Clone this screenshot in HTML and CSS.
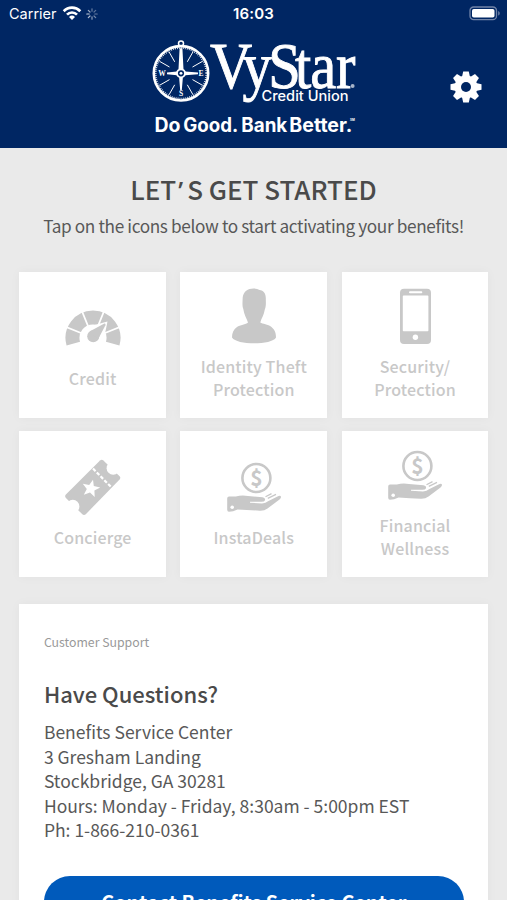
FILE: index.html
```html
<!DOCTYPE html>
<html lang="en">
<head>
    <meta charset="UTF-8">
    <meta name="viewport" content="width=device-width, initial-scale=1.0">
    <title>VyStar Credit Union</title>
    <link rel="stylesheet" href="styles.css">
</head>
<body>
    <header>
        <div class="status-bar">
            <div class="carrier">
                <span>Carrier</span>
                <svg class="wifi" width="20" height="16" viewBox="0 0 20 16">
                    <g fill="none" stroke="#fff" stroke-width="2.7">
                        <path d="M1.7 6.2a11.6 11.6 0 0 1 16.6 0"/>
                        <path d="M5 9.6a7 7 0 0 1 10 0"/>
                    </g>
                    <path d="M10 15l-3-3.1a4.3 4.3 0 0 1 6 0z" fill="#fff"/>
                </svg>
                <svg class="spinner" width="12" height="12" viewBox="-6 -6 12 12" stroke="#fff" stroke-width="1.2" stroke-linecap="round">
                    <path d="M0-2.8v-2.4" opacity=".4"/>
                    <path d="M2-2L3.7-3.7" opacity=".35"/>
                    <path d="M2.8 0h2.4" opacity=".4"/>
                    <path d="M2 2l1.7 1.7" opacity=".45"/>
                    <path d="M0 2.8v2.4" opacity=".55"/>
                    <path d="M-2 2l-1.7 1.7" opacity=".7"/>
                    <path d="M-2.8 0h-2.4" opacity=".8"/>
                    <path d="M-2-2l-1.7-1.7" opacity=".6"/>
                </svg>
            </div>
            <div class="time">16:03</div>
            <svg class="battery" width="32" height="15" viewBox="0 0 32 15">
                <rect x="1" y="1" width="26.5" height="12.6" rx="3.6" fill="none" stroke="#7184a8" stroke-width="1.3"/>
                <rect x="3" y="3" width="22.5" height="8.6" rx="1.8" fill="#fff"/>
                <path d="M29.2 5v4.6c2-.8 2-3.8 0-4.6z" fill="#7184a8"/>
            </svg>
        </div>
        <div class="brand-bar">
            <svg class="logo" width="208" height="100" viewBox="150 38 208 100" fill="#fff">
                <!-- Compass -->
                <g transform="translate(181 73.3)">
                    <circle r="27.2" fill="none" stroke="#fff" stroke-width="2.6"/>
                    <circle r="25.2" fill="none" stroke="#fff" stroke-width="1.5" stroke-dasharray=".8 1.2"/>
                    <circle cy="-29.8" r="2.5" fill="none" stroke="#fff" stroke-width="1.5"/>
                    <g stroke="#fff" stroke-width="1">
                        <path d="M6.3-11.5L12-21.5M11.5-6.3L21.5-12M11.5 6.3L21.5 12M6.3 11.5L12 21.5M-6.3 11.5L-12 21.5M-11.5 6.3L-21.5 12M-11.5-6.3L-21.5-12M-6.3-11.5L-12-21.5"/>
                    </g>
                    <path d="M-1.4-25h2.8L2.5-4h-5zM-14-.9L-4-1.9v3.8L-14 .9zM17-.9L4-1.9v3.8L17 .9zM-.8 17L-1.9 4h3.8L.8 17z"/>
                    <circle r="4" fill="#002663" stroke="#fff" stroke-width="1.8"/>
                    <circle r="1.4"/>
                    <g class="compass-text" text-anchor="middle">
                        <text x="-19" y="2.4">W</text>
                        <text x="20" y="2.4">E</text>
                        <text x="0" y="23">S</text>
                    </g>
                </g>
                <text class="logo-name" transform="translate(210 87.8) scale(.9 1)" x="0 36 64.8 94.5 111.5 140" y="0">VyStar</text>
                <circle cx="352.6" cy="86" r="2" opacity=".65"/>
                <text class="logo-sub" x="261.5" y="101" textLength="87" lengthAdjust="spacingAndGlyphs">Credit Union</text>
                <g class="logo-tag">
                    <text x="154.5" y="132.3" textLength="26" lengthAdjust="spacingAndGlyphs">Do</text>
                    <text x="183.2" y="132.3" textLength="55" lengthAdjust="spacingAndGlyphs">Good.</text>
                    <text x="241.3" y="132.3" textLength="46" lengthAdjust="spacingAndGlyphs">Bank</text>
                    <text x="289.3" y="132.3" textLength="63" lengthAdjust="spacingAndGlyphs">Better.</text>
                </g>
                <text class="logo-sm" x="350" y="121">SM</text>
            </svg>
            <svg class="gear" width="32" height="32" viewBox="-16 -16 32 32">
                <g fill="#fff">
                    <circle r="11.4"/>
                    <path id="tooth" d="M-4-10l1.2-5.5h5.6L4-10V10L2.8 15.5h-5.6L-4 10z"/>
                    <use href="#tooth" transform="rotate(45)"/>
                    <use href="#tooth" transform="rotate(90)"/>
                    <use href="#tooth" transform="rotate(135)"/>
                </g>
                <circle r="5" fill="#002663"/>
            </svg>
        </div>
    </header>

    <main>
        <div class="intro">
            <h1>LET<span class="apostrophe">’</span>S GET STARTED</h1>
            <p>Tap on the icons below to start activating your benefits!</p>
        </div>

        <div class="tiles">
            <div class="tile">
                <svg width="56" height="56" viewBox="0 0 56 56">
                    <path d="M8.3 43.6A20.5 20.5 0 1 1 47.7 43.6" fill="none" stroke="#c8c8c8" stroke-width="14"/>
                    <path d="M16 33L0 26.6M23 26L16.5 10M33 26L39.5 10M40 33L56 26.6" stroke="#fff" stroke-width="1.8"/>
                    <path d="M22 27L42.5 21.5L38.5 41z" fill="#fff"/>
                    <circle cx="28.2" cy="36.2" r="6"/>
                    <path d="M25 31.2L39.4 23.6Q41 23.4 40.4 25.2L33 39.5z"/>
                </svg>
                <span>Credit</span>
            </div>
            <div class="tile">
                <svg width="56" height="56" viewBox="0 0 56 56">
                    <path d="M22 34.5C20.5 30 18 26.5 17.3 21C16 18 16.6 13 16.7 9.5C17.2 3.5 22 .4 27.5.4C30 .4 32 1 33.5 2C37.5 2.5 39.8 5.5 39.8 10C39.8 14 40.3 18 38.8 21.5C38 27 35.5 30 34.3 34.5C36.5 36 42 36.3 45.5 39C49 42 50 45 50 49.5C48 53.5 38 55.3 28.2 55.3C18 55.3 8.5 53.5 6 49.5C6 45 7.5 41.5 11 39C14 37 20 36.3 22 34.5z"/>
                </svg>
                <span>Identity Theft<br>Protection</span>
            </div>
            <div class="tile">
                <svg width="56" height="56" viewBox="0 0 56 56">
                    <rect x="13" y=".7" width="31" height="55.3" rx="4"/>
                    <rect x="15.8" y="7.6" width="25.6" height="35.6" rx=".8" fill="#fff"/>
                    <rect x="22" y="3.2" width="13.3" height="2" rx="1" fill="#fff"/>
                    <circle cx="28.4" cy="49.2" r="2.7" fill="#fff"/>
                </svg>
                <span>Security/<br>Protection</span>
            </div>
            <div class="tile">
                <svg width="56" height="56" viewBox="0 0 56 56">
                    <path d="M35 1.6Q36.7 0 38.4 1.6L54.6 17.2Q56 18.8 54.6 20.4L20.8 55.2Q19 56.8 17.3 55.2L.9 39Q-.6 37.3.9 35.6z"/>
                    <circle cx="48.2" cy="9.2" r="6.6" fill="#fff"/>
                    <circle cx="7.8" cy="47.4" r="6.6" fill="#fff"/>
                    <path d="M28 9.6L46.5 28.4" stroke="#fff" stroke-width="2.2" stroke-dasharray="3.6 1.8"/>
                    <path d="M28 20.7L28.8 27L35.2 28.5L29.4 31.5L29.7 38L25 33.5L18.8 35.7L21.8 30L17.8 24.8L24.2 26z" fill="#fff"/>
                </svg>
                <span>Concierge</span>
            </div>
            <div class="tile">
                <svg width="56" height="56" viewBox="0 0 56 56">
                    <g id="coin-hand">
                        <circle cx="30.4" cy="19" r="14" fill="none" stroke="#c8c8c8" stroke-width="2.6"/>
                        <text class="dollar" x="30.4" y="26.8" text-anchor="middle">$</text>
                        <path d="M1.2 39.5Q1.2 37.8 3 37.6L9.8 37.4Q16 35.8 22 37L36.5 38.2Q39.6 38.8 39 41.2Q38.4 42.8 35 42.7L24 42.7L24 43.8L36 44.4Q40 44.4 42 42.3L51.5 37.4Q54.5 36 55 37.8Q55.2 39.2 53.5 40.4L41.5 49.5Q38.5 51.8 34 51.7Q23 51 11.5 50.4Q7 52.6 3 52.7Q1.2 52.6 1.2 50.8z"/>
                        <path d="M39.5 37.8L45.5 34.6M41.8 39.4L50 35.4" fill="none" stroke="#c8c8c8" stroke-width="1.2"/>
                        <circle cx="6.2" cy="48.3" r="1.8" fill="#fff"/>
                    </g>
                </svg>
                <span>InstaDeals</span>
            </div>
            <div class="tile">
                <svg width="56" height="56" viewBox="0 0 56 56">
                    <use href="#coin-hand"/>
                </svg>
                <span>Financial<br>Wellness</span>
            </div>
        </div>

        <div class="card">
            <p class="card-label">Customer Support</p>
            <h2>Have Questions?</h2>
            <p class="address">
                Benefits Service Center<br>
                3 Gresham Landing<br>
                Stockbridge, GA 30281<br>
                Hours: Monday - Friday, 8:30am - 5:00pm EST<br>
                Ph: 1-866-210-0361
            </p>
            <button>Contact Benefits Service Center</button>
        </div>
    </main>
</body>
</html>
```
FILE: styles.css
```css
/* General reset and font styling */
* {
    margin: 0;
    padding: 0;
    box-sizing: border-box;
}

body {
    font-family: 'Noto Sans CJK SC', 'Noto Sans', sans-serif;
    background-color: #eaeaea;
    color: #585858;
    height: 900px;
    overflow: hidden;
}

svg {
    display: block;
    flex-shrink: 0;
}

/* Header */
header {
    height: 147.5px;
    background-color: #002663;
    color: white;
}

.status-bar {
    display: grid;
    grid-template-columns: 1fr auto 1fr;
    align-items: center;
    height: 28px;
    padding: 0 6px 0 9px;
    font-family: 'Inter', sans-serif;
}

.carrier {
    display: flex;
    align-items: center;
    font-size: 14.5px;
    margin-top: -1px;
}

.wifi {
    margin: -1px 4px 0 5px;
}

.time {
    font-size: 15px;
    font-weight: 600;
    letter-spacing: 0.2px;
    margin: -1px 3px 0 0;
}

.battery {
    justify-self: end;
    margin-top: -2px;
}

.brand-bar {
    display: grid;
    grid-template-columns: 1fr auto 1fr;
    padding-top: 10px;
}

.logo {
    grid-column: 2;
}

.gear {
    justify-self: end;
    margin: 33px 25px 0 0;
}

.compass-text {
    font: bold 7.5px 'Liberation Serif', serif;
}

.logo-name {
    font: 65px 'Liberation Serif', serif;
    stroke: #fff;
    stroke-width: 0.9px;
}

.logo-sub {
    font: 500 14px 'Inter', sans-serif;
}

.logo-tag {
    font: 700 19.5px 'Inter', sans-serif;
}

.logo-sm {
    font: 700 3px 'Inter', sans-serif;
}

/* Intro */
.intro {
    height: 124px;
    padding-top: 23.5px;
    text-align: center;
}

.intro h1 {
    font-size: 26px;
    font-weight: 500;
    line-height: 36px;
    color: #4a4a4a;
}

.apostrophe {
    font-family: 'Noto Sans', sans-serif;
    line-height: 1;
    padding: 0 4px 0 2px;
}

.intro p {
    font-size: 17.2px;
    line-height: 24px;
    letter-spacing: -0.36px;
    margin-top: 7px;
}

/* Benefit tiles */
.tiles {
    display: grid;
    grid-template-columns: repeat(3, 1fr);
    grid-auto-rows: 146.5px;
    gap: 12.5px 14.5px;
    padding: 0 18.7px 0 19.3px;
}

.tile {
    display: flex;
    flex-direction: column;
    align-items: center;
    justify-content: center;
    gap: 11px;
    background-color: white;
    box-shadow: 0 0 10px rgba(0,0,0,0.04);
    color: #c8c8c8;
    fill: #c8c8c8;
    font-size: 16px;
    font-weight: 500;
    line-height: 23px;
    letter-spacing: 0.15px;
    text-align: center;
}

.dollar {
    font: 700 21px 'Noto Sans CJK SC', sans-serif;
    letter-spacing: 0;
}

/* Support card */
.card {
    height: 340px;
    margin: 27px 18.7px 0 19.3px;
    padding: 28px 24.6px 0;
    background-color: white;
    box-shadow: 0 0 10px rgba(0,0,0,0.04);
}

.card-label {
    font-size: 12.3px;
    line-height: 20px;
    color: #999;
}

.card h2 {
    font-size: 22px;
    font-weight: 500;
    line-height: 32px;
    margin-top: 25px;
    color: #4a4a4a;
}

.address {
    font-size: 17.5px;
    line-height: 24.6px;
    margin-top: 11px;
}

button {
    display: block;
    width: 100%;
    height: 52px;
    margin-top: 33px;
    border: none;
    border-radius: 26px;
    background-color: #005abb;
    color: white;
    font-family: inherit;
    font-size: 19.7px;
    font-weight: 700;
}
```
